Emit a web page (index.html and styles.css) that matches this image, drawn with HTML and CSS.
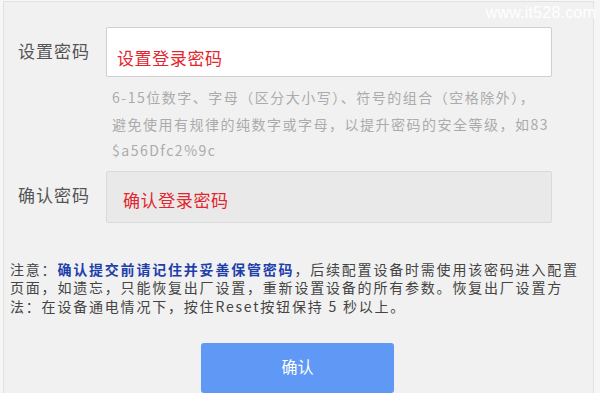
FILE: index.html
```html
<!DOCTYPE html>
<html lang="zh-CN">
<head>
<meta charset="utf-8">
<title>设置密码</title>
<link rel="stylesheet" href="styles.css">
</head>
<body>
<div class="panel">
  <div class="watermark">www.it528.com</div>
  <div class="row row-first">
    <label class="label" for="pwd">设置密码</label>
    <input class="field field-new" id="pwd" type="text" placeholder="设置登录密码">
  </div>
  <p class="hint">6-15位数字、字母（区分大小写）、符号的组合（空格除外），<br>避免使用有规律的纯数字或字母，以提升密码的安全等级，如83<br>$a56Dfc2%9c</p>
  <div class="row row-second">
    <label class="label" for="pwd2">确认密码</label>
    <input class="field field-confirm" id="pwd2" type="text" placeholder="确认登录密码">
  </div>
  <p class="notice">注意：<span class="notice-em">确认提交前请记住并妥善保管密码</span>，后续配置设备时需使用该密码进入配置<br>页面，如遗忘，只能恢复出厂设置，重新设置设备的所有参数。恢复出厂设置方<br>法：在设备通电情况下，按住Reset按钮保持 5 秒以上。</p>
  <button class="btn" type="button">确认</button>
</div>
</body>
</html>
```
FILE: styles.css
```css
* { box-sizing: border-box; }
html, body { margin: 0; padding: 0; }
body {
  background: #f6f6f6;
  font-family: "Noto Sans CJK SC", "Noto Sans", sans-serif;
  overflow: hidden;
}
.panel {
  position: relative;
  margin: 1px 0 0 3px;
  width: 591px;
  height: 400px;
  background: #f1f1f1;
  border: 1px solid #e2e2e2;
  border-bottom: none;
}
.watermark {
  position: absolute;
  top: 2px;
  right: -3px;
  font-family: "Liberation Sans", Arial, sans-serif;
  font-size: 16px;
  color: #ffffff;
  letter-spacing: 0.2px;
}
.row {
  display: flex;
  align-items: center;
  padding-left: 14px;
}
.row-first { padding-top: 25px; }
.row-second { margin-top: 7px; }
.label {
  width: 88px;
  font-size: 17px;
  letter-spacing: 1px;
  color: #555;
  margin-top: -4px;
}
.field {
  width: 446px;
  border: 1px solid #cfcfcf;
  border-radius: 2px;
  font-family: "Noto Sans CJK SC", sans-serif;
  font-size: 17px;
  letter-spacing: 0.6px;
  outline: none;
  margin: 0;
}
.field::placeholder { color: #e3262d; opacity: 1; }
.field-new {
  height: 50px;
  background: #fff;
  padding: 10px 10px 0;
}
.field-confirm {
  height: 52px;
  background: #e9e9e9;
  border-color: #dadada;
  padding: 6px 16px 0;
}
.hint {
  margin: 7px 0 0 108px;
  font-size: 14px;
  line-height: 26.5px;
  letter-spacing: 1.5px;
  color: #ababab;
  white-space: nowrap;
}
.notice {
  margin: 37px 0 0 6px;
  font-size: 14px;
  line-height: 18.5px;
  letter-spacing: 1.8px;
  color: #444;
  white-space: nowrap;
}
.notice-em {
  color: #1f3faa;
  font-weight: bold;
}
.btn {
  display: block;
  margin: 28px 0 0 197px;
  width: 193px;
  height: 50px;
  border: none;
  border-radius: 3px;
  background: #5f98f5;
  color: #fff;
  font-family: "Noto Sans CJK SC", sans-serif;
  font-size: 16px;
  padding: 0 0 4px;
}
```
